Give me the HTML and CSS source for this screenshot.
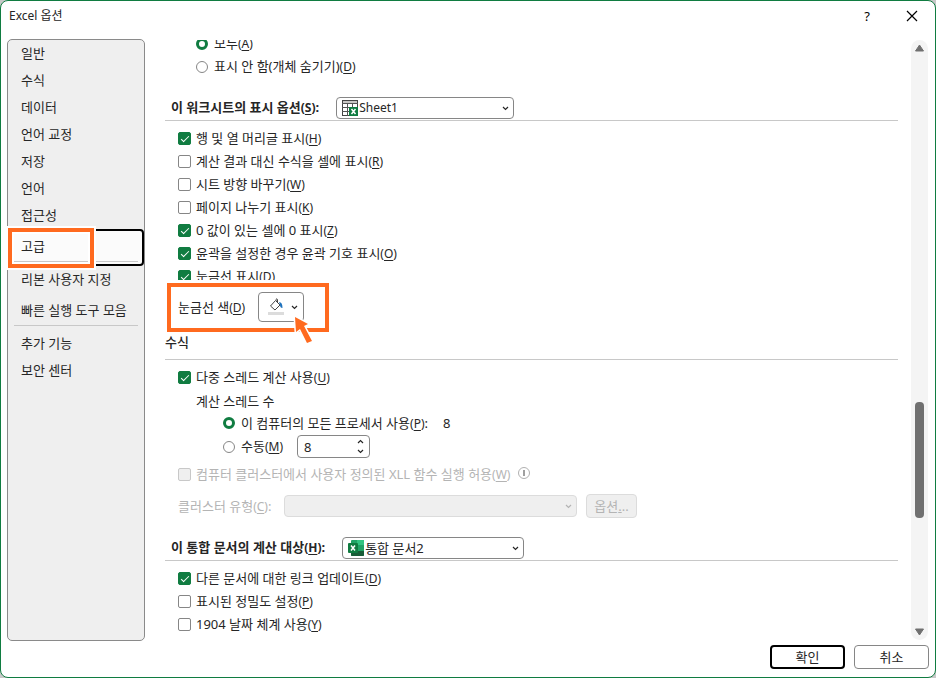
FILE: index.html
```
<!DOCTYPE html>
<html lang="ko">
<head>
    <meta charset="UTF-8">
    <meta name="viewport" content="width=device-width, initial-scale=1.0">
    <title>Excel 옵션</title>

    <link rel="stylesheet" href="styles.css">
</head>
<body>

    <div class="window">

        <header class="titlebar">
            <h1>Excel 옵션</h1>
            <button type="button" class="help">?</button>
            <button type="button" class="close" aria-label="닫기">
                <svg width="12" height="12" viewBox="0 0 12 12"><path d="M1 1L11 11M11 1L1 11" stroke="#000" stroke-width="1.2" fill="none"/></svg>
            </button>
        </header>

        <div class="main">

            <nav class="sidebar">
                <button type="button">일반</button>
                <button type="button">수식</button>
                <button type="button">데이터</button>
                <button type="button">언어 교정</button>
                <button type="button">저장</button>
                <button type="button">언어</button>
                <button type="button">접근성</button>
                <button type="button" class="selected">고급</button>
                <button type="button">리본 사용자 지정</button>
                <button type="button" class="last">빠른 실행 도구 모음</button>
                <hr>
                <button type="button">추가 기능</button>
                <button type="button">보안 센터</button>
            </nav>

            <form class="content" id="options">

                <div class="objects">
                    <label class="row"><input type="radio" name="objects" checked><span>모두<span class="key">(<u>A</u>)</span></span></label>
                    <label class="row"><input type="radio" name="objects"><span>표시 안 함(개체 숨기기)<span class="key">(<u>D</u>)</span></span></label>
                </div>

                <div class="heading first">
                    <label for="sheet">이 워크시트의 표시 옵션<span class="key">(<u>S</u>)</span>:</label>
                    <div class="combo sheet">
                        <svg class="icon" width="16" height="16" viewBox="0 0 16 16">
                            <rect x="0.5" y="0.5" width="15" height="15" fill="#fff" stroke="#444"/>
                            <rect x="1" y="1" width="14" height="2" fill="#c8c6c4"/>
                            <path d="M0 3.5H16M0 7.500H7M0 11.500H7" stroke="#555" fill="none"/>
                            <path d="M5.5 4V16M10.5 4V7" stroke="#555" fill="none"/>
                            <rect x="7" y="7" width="9" height="9" fill="#107c41"/>
                            <path d="M9.5 9L13.5 14M13.5 9L9.5 14" stroke="#fff" stroke-width="1.5"/>
                        </svg>
                        <select id="sheet"><option>Sheet1</option></select>
                        <svg class="arrow" width="7" height="5" viewBox="0 0 7 5"><path d="M1 1L3.5 3.5L6 1"/></svg>
                    </div>
                </div>

                <div class="list">
                    <label class="row"><input type="checkbox" checked><span>행 및 열 머리글 표시<span class="key">(<u>H</u>)</span></span></label>
                    <label class="row"><input type="checkbox"><span>계산 결과 대신 수식을 셀에 표시<span class="key">(<u>R</u>)</span></span></label>
                    <label class="row"><input type="checkbox"><span>시트 방향 바꾸기<span class="key">(<u>W</u>)</span></span></label>
                    <label class="row"><input type="checkbox"><span>페이지 나누기 표시<span class="key">(<u>K</u>)</span></span></label>
                    <label class="row"><input type="checkbox" checked><span>0 값이 있는 셀에 0 표시<span class="key">(<u>Z</u>)</span></span></label>
                    <label class="row"><input type="checkbox" checked><span>윤곽을 설정한 경우 윤곽 기호 표시<span class="key">(<u>O</u>)</span></span></label>
                    <div class="cut">
                        <label class="row"><input type="checkbox" checked><span>눈금선 표시<span class="key">(<u>D</u>)</span></span></label>
                    </div>
                </div>

                <div class="gridcolor">
                    <label for="color">눈금선 색<span class="key">(<u>D</u>)</span></label>
                    <button type="button" class="color" id="color">
                        <svg width="18" height="18" viewBox="0 0 18 18">
                            <rect x="1" y="14" width="16" height="3" fill="#dcdcdc"/>
                            <path d="M8.5 2.5L3.5 8L8 12L13 7L9 3V1.5Q10 0 10.5 1.5V5" fill="#fff" stroke="#444"/>
                            <path d="M12 4Q15.5 4 15.5 10Q13 10 13 7Z" fill="#1e72bd"/>
                        </svg>
                        <svg class="chevron" width="7" height="5" viewBox="0 0 7 5"><path d="M1 1L3.5 3.5L6 1"/></svg>
                    </button>
                    <svg class="pointer" width="24" height="34" viewBox="0 0 24 34">
                        <path d="M2 3L15 10L11 12L19 27L14 29L7 15L3 18Z" fill="#fff" stroke="#fff" stroke-width="3"/>
                        <path d="M2 3L15 10L11 12L19 27L14 29L7 15L3 18Z" fill="#ff6a1f"/>
                    </svg>
                </div>

                <h2>수식</h2>

                <div class="list">
                    <label class="row"><input type="checkbox" checked><span>다중 스레드 계산 사용<span class="key">(<u>U</u>)</span></span></label>
                    <div class="row threads">계산 스레드 수</div>
                    <label class="row sub"><input type="radio" name="threads" checked><span>이 컴퓨터의 모든 프로세서 사용<span class="key">(<u>P</u>)</span>:</span><span class="count">8</span></label>
                    <div class="row sub manual">
                        <input type="radio" name="threads" id="manual">
                        <label for="manual">수동<span class="key">(<u>M</u>)</span></label>
                        <div class="spinner">
                            <input type="text" value="8" aria-label="계산 스레드 수">
                            <div class="steps">
                                <button type="button" aria-label="늘리기"><svg width="7" height="5" viewBox="0 0 7 5"><path d="M1 4L3.5 1.5L6 4"/></svg></button>
                                <button type="button" aria-label="줄이기"><svg width="7" height="5" viewBox="0 0 7 5"><path d="M1 1L3.5 3.5L6 1"/></svg></button>
                            </div>
                        </div>
                    </div>
                    <label class="row disabled xll">
                        <input type="checkbox" disabled><span>컴퓨터 클러스터에서 사용자 정의된 XLL 함수 실행 허용<span class="key">(<u>W</u>)</span></span>
                        <svg width="12" height="12" viewBox="0 0 12 12"><circle cx="6" cy="6" r="5.5" fill="none" stroke="#b0b0b0"/><path d="M6 3V9" stroke="#a0a0a0" stroke-width="2"/></svg>
                    </label>
                    <div class="row disabled cluster">
                        <label for="cluster">클러스터 유형<span class="key">(<u>C</u>)</span>:</label>
                        <div class="combo type">
                            <select id="cluster" disabled></select>
                            <svg class="arrow" width="7" height="5" viewBox="0 0 7 5"><path d="M1 1L3.5 3.5L6 1"/></svg>
                        </div>
                        <button type="button" disabled>옵션<u>.</u>..</button>
                    </div>
                </div>

                <div class="heading">
                    <label for="book">이 통합 문서의 계산 대상<span class="key">(<u>H</u>)</span>:</label>
                    <div class="combo book">
                        <svg class="icon" width="16" height="16" viewBox="0 0 16 16">
                            <rect x="3" width="13" height="16" rx="1" fill="#21a366"/>
                            <rect x="9" width="7" height="5" fill="#33c481"/>
                            <rect x="3" y="5" width="6" height="6" fill="#107c41"/>
                            <path d="M3 11H16V15Q16 16 15 16H4Q3 16 3 15Z" fill="#185c37"/>
                            <rect y="3" width="10" height="10" rx="1" fill="#107c41"/>
                            <path d="M3 5.5L7 10.5M7 5.5L3 10.5" stroke="#fff" stroke-width="1.5"/>
                        </svg>
                        <select id="book"><option>통합 문서2</option></select>
                        <svg class="arrow" width="7" height="5" viewBox="0 0 7 5"><path d="M1 1L3.5 3.5L6 1"/></svg>
                    </div>
                </div>

                <div class="list">
                    <label class="row"><input type="checkbox" checked><span>다른 문서에 대한 링크 업데이트<span class="key">(<u>D</u>)</span></span></label>
                    <label class="row"><input type="checkbox"><span>표시된 정밀도 설정<span class="key">(<u>P</u>)</span></span></label>
                    <label class="row"><input type="checkbox"><span>1904 날짜 체계 사용<span class="key">(<u>Y</u>)</span></span></label>
                </div>

            </form>

            <div class="scrollbar">
                <svg width="11" height="8" viewBox="0 0 11 8"><path d="M5.5 1L9.5 7H1.5Z" fill="#707070" stroke="#707070" stroke-linejoin="round"/></svg>
                <div class="track"><div class="thumb"></div></div>
                <svg width="11" height="8" viewBox="0 0 11 8"><path d="M5.5 7L9.5 1H1.5Z" fill="#707070" stroke="#707070" stroke-linejoin="round"/></svg>
            </div>

        </div>

        <footer class="footer">
            <button type="submit" form="options" class="ok">확인</button>
            <button type="button">취소</button>
        </footer>

    </div>

</body>
</html>
```
FILE: styles.css
```
*, *::before, *::after{
    box-sizing: border-box;
}

body{
    margin: 0;
    background: #c8c8c8;
    color: #262626;
    font-family: "Noto Sans", "Noto Sans CJK KR", sans-serif;
    font-size: 13px;
    line-height: 22px;
}

button, select, input{
    margin: 0;
    font: inherit;
    color: inherit;
}

.window{
    display: flex;
    flex-direction: column;
    min-height: 100vh;
    background: #fff;
    border: 1px solid #107c41;
    border-radius: 8px;
}

/* title bar */

.titlebar{
    display: flex;
    align-items: center;
    height: 38px;
    padding: 0 8px 9px 8px;
}

.titlebar h1{
    flex: 1;
    margin: 0;
    font-size: 12px;
    font-weight: normal;
}

.titlebar button{
    display: flex;
    align-items: center;
    justify-content: center;
    width: 30px;
    height: 26px;
    padding: 0;
    border: none;
    background: none;
    color: #000;
}

.titlebar .help{
    margin-right: 15px;
}

/* category list */

.main{
    flex: 1;
    display: flex;
    padding-left: 6px;
    padding-right: 7px;
}

.sidebar{
    flex: none;
    width: 138px;
    background: #efefef;
    border: 1px solid #8a8a8a;
    border-radius: 5px;
}

.sidebar button{
    display: block;
    width: 100%;
    height: 27px;
    padding: 0 0 2px 13px;
    border: none;
    background: none;
    text-align: left;
}

.sidebar .selected{
    position: relative;
    height: 37px;
    padding-left: 11px;
    padding-bottom: 4px;
    background: #fbfbfb;
    border: 2px solid #000;
    border-radius: 4px;
}

.sidebar .selected::before{
    content: "";
    position: absolute;
    left: 4px;
    right: 4px;
    bottom: 2px;
    border-top: 1px solid #c8c8c8;
}

.sidebar .selected::after{
    content: "";
    position: absolute;
    left: -2px;
    top: -3px;
    width: 86px;
    height: 40px;
    border: 4px solid #ff6a1f;
    box-shadow: 0 0 0 2px #fff, inset 0 0 0 2px #fff;
}

.sidebar .last{
    margin-top: 4px;
}

.sidebar hr{
    margin: 1px 6px 4px;
    border: none;
    border-top: 1px solid #c8c8c8;
}

/* options */

.content{
    flex: 1;
    margin-left: 20px;
    margin-top: 1px;
    overflow: hidden;
}

.row{
    display: flex;
    align-items: center;
    height: 23px;
}

.key{
    font-size: 12px;
}

.key u{
    text-underline-offset: 2px;
}

.objects{
    margin-top: -8px;
    padding-left: 31px;
}

.list{
    padding: 6px 0 0 13px;
}

input[type="checkbox"], input[type="radio"]{
    appearance: none;
    flex: none;
    border: 1px solid #868686;
    background: #fff;
}

input[type="checkbox"]{
    display: flex;
    justify-content: center;
    width: 13px;
    height: 13px;
    margin-right: 5px;
    border-radius: 2px;
}

input[type="checkbox"]:checked{
    background: #107c41;
    border-color: #107c41;
}

input[type="checkbox"]:checked::before{
    content: "";
    width: 8px;
    height: 4px;
    margin-top: 3px;
    border-left: 1px solid #fff;
    border-bottom: 1px solid #fff;
    transform: rotate(-45deg);
}

input[type="checkbox"]:disabled{
    background: #efefef;
    border-color: #c8c8c8;
}

input[type="radio"]{
    width: 12px;
    height: 12px;
    margin-right: 6px;
    border-radius: 50%;
}

input[type="radio"]:checked{
    border: 3px solid #107c41;
}

.heading{
    display: flex;
    align-items: flex-end;
    height: 42px;
    padding: 0 0 1px 6px;
    border-bottom: 1px solid #c8c8c8;
}

.first{
    height: 43px;
}

.heading label{
    margin-right: 17px;
    font-weight: bold;
}

h2{
    margin: 0;
    height: 38px;
    padding-top: 9px;
    border-bottom: 1px solid #c8c8c8;
    font-size: 13px;
    font-weight: 500;
}

.combo{
    position: relative;
    height: 22px;
}

.combo select{
    appearance: none;
    display: block;
    width: 100%;
    height: 100%;
    padding: 0 20px 0 22px;
    border: 1px solid #868686;
    border-radius: 4px;
    background: #fff;
    line-height: 20px;
}

.combo .icon{
    position: absolute;
    left: 6px;
    top: 3px;
}

.combo .arrow{
    position: absolute;
    right: 5px;
    top: 9px;
}

.arrow path, .chevron path, .steps path{
    fill: none;
    stroke: #262626;
    stroke-width: 1.2;
}

.sheet{
    width: 178px;
}

.sheet select{
    font-size: 12px;
}

.book{
    width: 182px;
}

.cut{
    height: 15px;
    overflow: hidden;
}

.gridcolor{
    position: relative;
    display: flex;
    align-items: center;
    padding: 12px 0 0 13px;
}

.gridcolor label{
    width: 80px;
}

.gridcolor::after{
    content: "";
    position: absolute;
    left: 2px;
    top: 3px;
    width: 162px;
    height: 49px;
    border: 4px solid #ff6a1f;
}

.color{
    display: flex;
    align-items: center;
    justify-content: space-between;
    width: 46px;
    height: 30px;
    padding: 0 5px 0 8px;
    border: 1px solid #868686;
    border-radius: 4px;
    background: #fff;
}

.pointer{
    position: absolute;
    z-index: 1;
    left: 128px;
    top: 34px;
}

.threads{
    padding-left: 18px;
}

.sub{
    height: 22px;
    padding-left: 45px;
}

.count{
    margin-left: 15px;
}

.manual{
    height: 25px;
}

.manual label{
    width: 56px;
}

.spinner{
    display: flex;
    width: 73px;
    height: 23px;
    border: 1px solid #868686;
    border-radius: 4px;
}

.spinner input{
    flex: 1;
    min-width: 0;
    padding: 0 0 0 6px;
    border: none;
    background: none;
}

.steps{
    display: flex;
    flex-direction: column;
    width: 12px;
}

.steps button{
    flex: 1;
    display: flex;
    align-items: center;
    padding: 0;
    border: none;
    background: none;
}

.disabled{
    color: #b4b4b4;
}

.xll{
    margin-top: 4px;
}

.xll svg{
    align-self: flex-start;
    margin: 4px 0 0 8px;
}

.cluster{
    height: 26px;
    margin-top: 7px;
}

.cluster label{
    width: 106px;
}

.type{
    width: 293px;
}

.type select, .cluster button{
    background: #efefef;
    border: 1px solid #dcdcdc;
    opacity: 1;
}

.type .arrow path{
    stroke: #b4b4b4;
}

.cluster button{
    width: 51px;
    height: 24px;
    margin-left: 9px;
    padding: 0;
    border-radius: 4px;
    line-height: 20px;
}

/* scroll bar */

.scrollbar{
    display: flex;
    flex-direction: column;
    align-items: center;
    justify-content: space-between;
    width: 17px;
    margin: 1px 0 1px 13px;
    padding: 4px 0;
    border-radius: 9px;
    background: #f4f4f4;
}

.track{
    flex: 1;
    display: flex;
    padding-top: 350px;
}

.thumb{
    width: 9px;
    height: 116px;
    border-radius: 4px;
    background: #707070;
}

/* buttons */

.footer{
    display: flex;
    justify-content: flex-end;
    gap: 9px;
    height: 36px;
    padding: 4px 6px 8px;
}

.footer button{
    width: 75px;
    padding: 0;
    border: 1px solid #868686;
    border-radius: 4px;
    background: #fff;
    line-height: 20px;
}

.footer .ok{
    border: 2px solid #000;
}
```
